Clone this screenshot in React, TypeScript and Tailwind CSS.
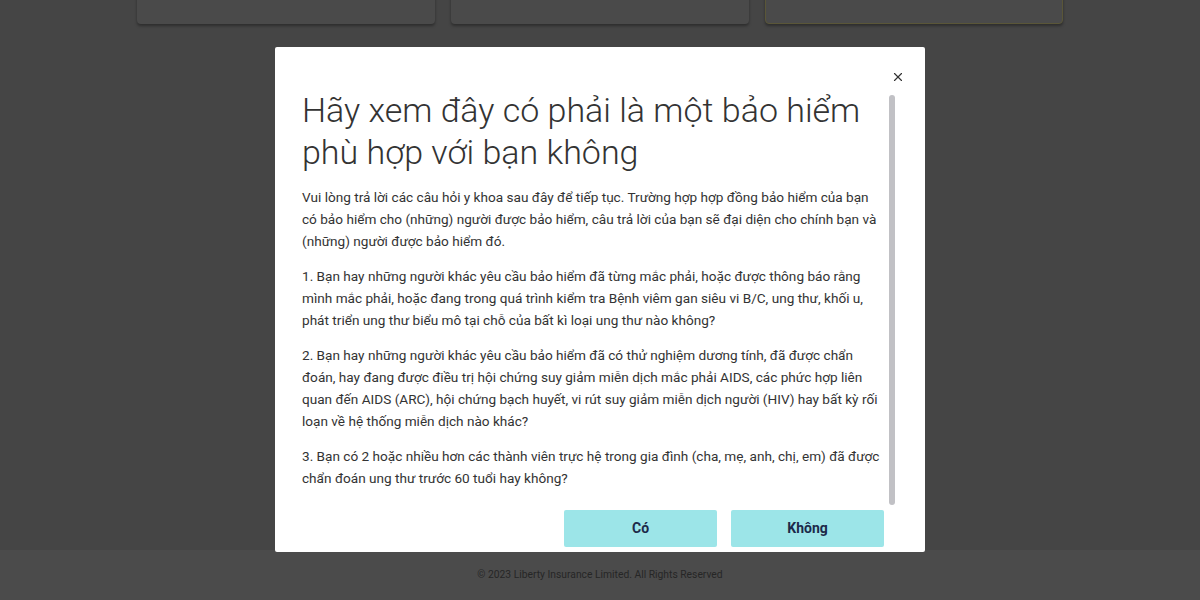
import { X } from 'lucide-react';

const paragraphs = [
  'Vui lòng trả lời các câu hỏi y khoa sau đây để tiếp tục. Trường hợp hợp đồng bảo hiểm của bạn có bảo hiểm cho (những) người được bảo hiểm, câu trả lời của bạn sẽ đại diện cho chính bạn và (những) người được bảo hiểm đó.',
  '1. Bạn hay những người khác yêu cầu bảo hiểm đã từng mắc phải, hoặc được thông báo rằng mình mắc phải, hoặc đang trong quá trình kiểm tra Bệnh viêm gan siêu vi B/C, ung thư, khối u, phát triển ung thư biểu mô tại chỗ của bất kì loại ung thư nào không?',
  '2. Bạn hay những người khác yêu cầu bảo hiểm đã có thử nghiệm dương tính, đã được chẩn đoán, hay đang được điều trị hội chứng suy giảm miễn dịch mắc phải AIDS, các phức hợp liên quan đến AIDS (ARC), hội chứng bạch huyết, vi rút suy giảm miễn dịch người (HIV) hay bất kỳ rối loạn về hệ thống miễn dịch nào khác?',
  '3. Bạn có 2 hoặc nhiều hơn các thành viên trực hệ trong gia đình (cha, mẹ, anh, chị, em) đã được chẩn đoán ung thư trước 60 tuổi hay không?',
];

const App = () => {
  return (
    <div className="relative w-full h-[600px] overflow-hidden font-['Roboto','Liberation_Sans',sans-serif]">
      {/* Page behind the overlay */}
      <div className="flex flex-col h-full">
        <div className="h-[550px] bg-[#454545]">
          <div className="flex justify-center gap-4 -mt-[10px]">
            <div className="w-[298px] h-[34px] bg-[#4a4a4a] rounded-b-sm shadow-[0_2px_3px_rgba(0,0,0,0.35)]" />
            <div className="w-[298px] h-[34px] bg-[#4a4a4a] rounded-b-sm shadow-[0_2px_3px_rgba(0,0,0,0.35)]" />
            <div className="w-[298px] h-[34px] bg-[#4a4a4a] rounded-b-sm border border-[#5a5638] shadow-[0_2px_3px_rgba(0,0,0,0.35)]" />
          </div>
        </div>
        <footer className="flex-1 bg-[#4b4b4b] flex items-center justify-center">
          <p className="text-[10.3px] text-[#262626]">© 2023 Liberty Insurance Limited. All Rights Reserved</p>
        </footer>
      </div>

      {/* Modal */}
      <div className="absolute left-[275px] top-[47px] w-[650px] h-[505px] bg-white rounded-[2px] overflow-hidden">
        <button className="absolute right-[20px] top-[23px] text-[#333]">
          <X size={14} strokeWidth={2} />
        </button>
        {/* scrollbar thumb */}
        <div className="absolute left-[614px] top-[48px] w-[6px] h-[410px] rounded-full bg-[#c1c1c5]" />

        <div className="pl-[27px] pr-[42px] pt-[42px]">
          <h2 className="text-[34px] leading-[42px] font-light text-[#333] mb-[13px]">
            Hãy xem đây có phải là một bảo hiểm phù hợp với bạn không
          </h2>
          <div className="flex flex-col gap-[13px] text-[13.6px] leading-[22px] text-[#333]">
            {paragraphs.map((p) => (
              <p key={p.slice(0, 12)}>{p}</p>
            ))}
          </div>
          <div className="flex justify-end gap-[14px] mt-[21px] pr-[-1px]">
            <button className="w-[153px] h-[37px] bg-[#9ce5e8] rounded-[2px] text-[14px] font-bold text-[#1c2a4a]">
              Có
            </button>
            <button className="w-[153px] h-[37px] bg-[#9ce5e8] rounded-[2px] text-[14px] font-bold text-[#1c2a4a] -mr-px">
              Không
            </button>
          </div>
        </div>
      </div>
    </div>
  );
};

export default App;
